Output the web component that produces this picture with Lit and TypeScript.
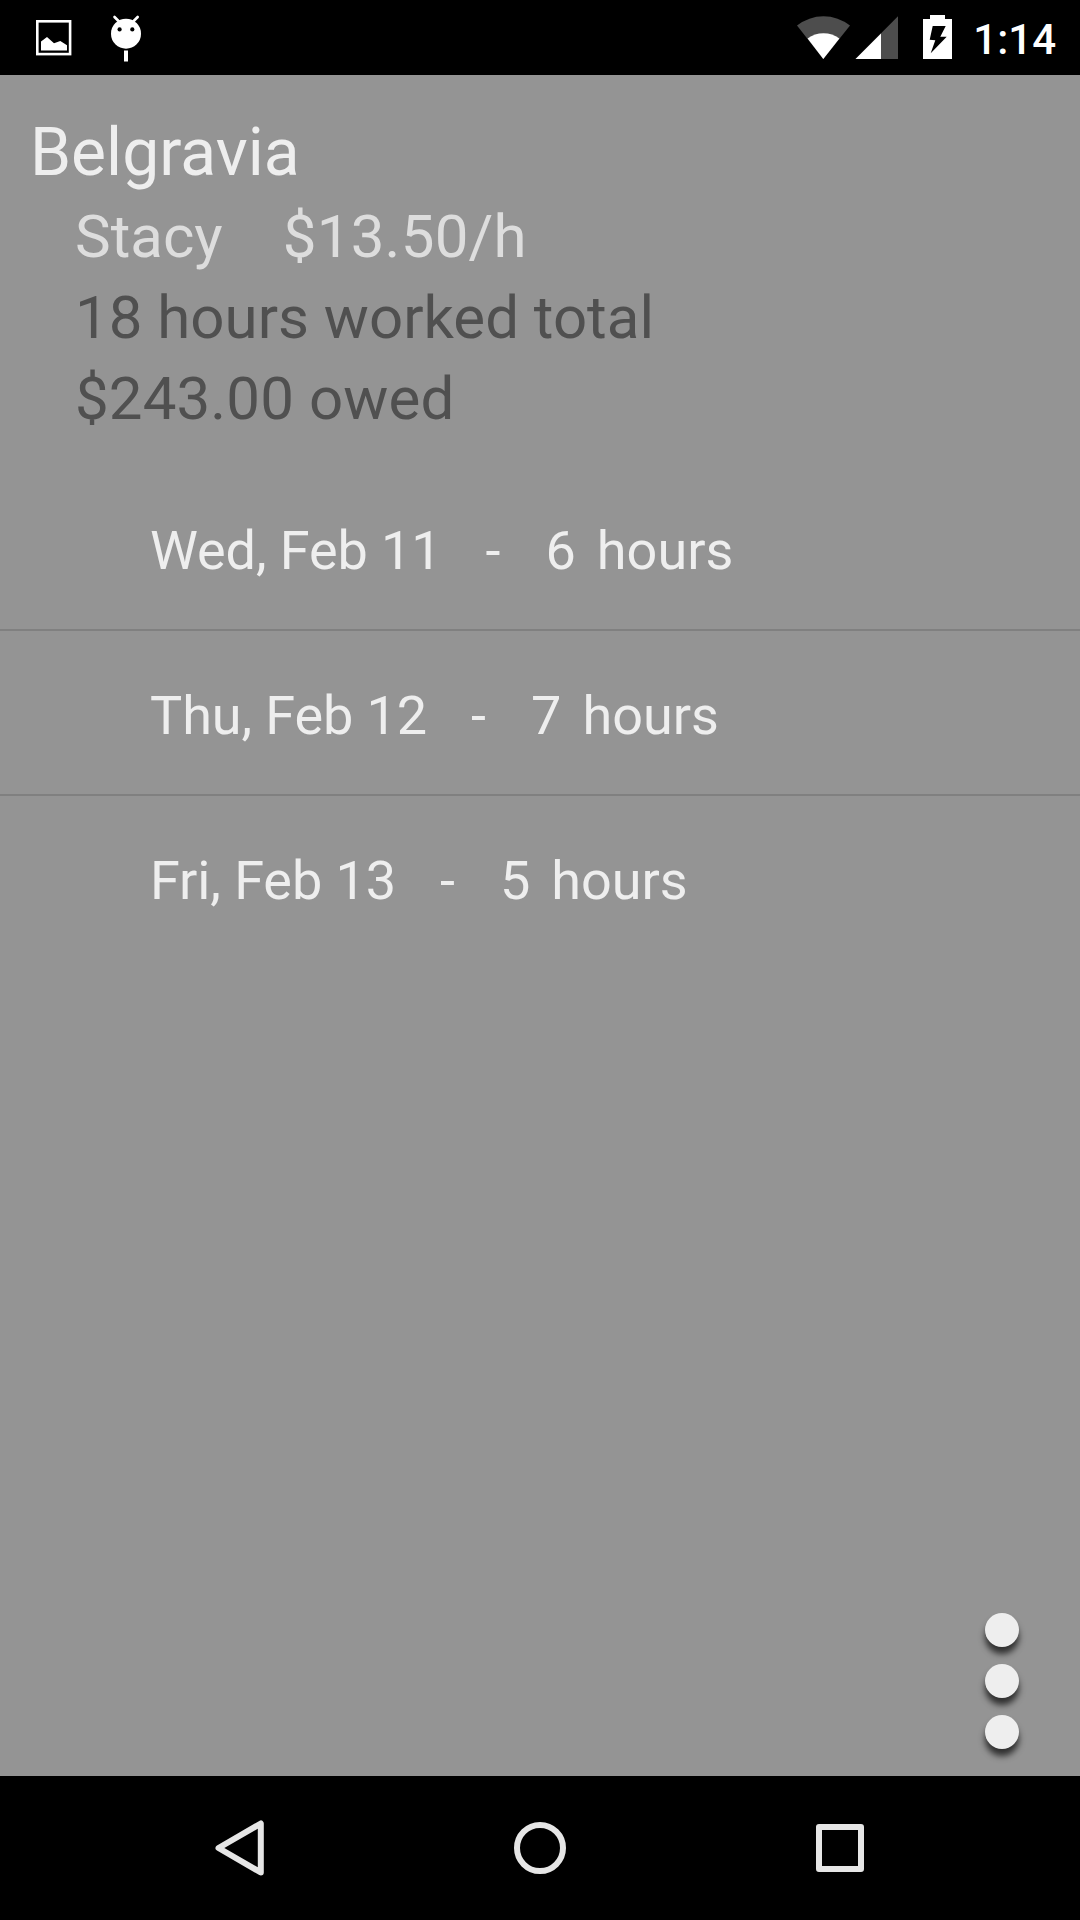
import { LitElement, html, css } from "lit";
import { customElement, property } from "lit/decorators.js";

interface Shift {
  day: string;
  hours: number;
}

@customElement("status-bar")
class StatusBar extends LitElement {
  static styles = css`
    :host {
      display: flex;
      justify-content: space-between;
      height: 75px;
      background: #000;
      color: #fff;
    }
    .group {
      display: flex;
      align-items: flex-start;
    }
    svg {
      display: block;
    }
    .clock {
      font-size: 42px;
      font-weight: 500;
      line-height: 75px;
      padding: 2px 24px 0 17px;
    }
  `;

  @property() time = "";

  render() {
    return html`
      <div class="group">
        <svg width="160" height="75" viewBox="0 0 160 75" fill="#fff">
          <rect x="37.3" y="21.3" width="32.8" height="32.8" fill="none" stroke="#fff" stroke-width="2.6" />
          <path d="M41 41.5 47 37l7 6.3 6.3-2.3 6.7 4.3v5.2H41z" />
          <circle cx="126" cy="33.7" r="15" />
          <path d="M114.5 17l5 5M137.7 17l-5 5" stroke="#fff" stroke-width="2.6" stroke-linecap="round" />
          <circle cx="119.6" cy="29.4" r="2.1" fill="#000" />
          <circle cx="132.3" cy="29.4" r="2.1" fill="#000" />
          <rect x="124" y="50.5" width="4" height="11" />
        </svg>
      </div>
      <div class="group">
        <svg width="160" height="75" viewBox="796 0 160 75" fill="#fff">
          <path d="M823.3 59 797 25.5a43 43 0 0 1 53 0z" fill="#4d4d4d" />
          <path d="M823.3 59 807.6 38.6a26 26 0 0 1 31.8 0z" />
          <path d="M855.5 59 898 16.3V59z" fill="#4d4d4d" />
          <path d="M855.5 59 881 33.4V59z" />
          <path d="M923 19h7v-4h15v4h7v40h-29z" />
          <path d="M932.7 26h13l-5.4 10.7h6.4l-16 16.6 4.6-13-5.6-.5z" fill="#000" />
        </svg>
        <div class="clock">${this.time}</div>
      </div>
    `;
  }
}

@customElement("job-summary")
class JobSummary extends LitElement {
  static styles = css`
    :host {
      display: block;
      padding: 34px 30px 27px;
      font-size: 60px;
      line-height: 81px;
      color: #505050;
    }
    .title {
      font-size: 66px;
      line-height: 87px;
      color: #eee;
    }
    .details {
      padding-left: 45px;
    }
    .worker {
      display: flex;
      gap: 60px;
      color: #ddd;
    }
    .rate {
      letter-spacing: 0.25px;
    }
    .owed {
      letter-spacing: 0.12px;
    }
  `;

  render() {
    return html`
      <div class="title">Belgravia</div>
      <div class="details">
        <div class="worker"><span>Stacy</span><span class="rate">$13.50/h</span></div>
        <div>18 hours worked total</div>
        <div class="owed">$243.00 owed</div>
      </div>
    `;
  }
}

@customElement("shift-list")
class ShiftList extends LitElement {
  static styles = css`
    .row {
      display: flex;
      box-sizing: border-box;
      height: 163px;
      padding: 6px 0 0 150px;
      font-size: 54px;
      line-height: 157px;
      color: #eee;
    }
    .row + .row {
      height: 165px;
      border-top: 2px solid #808080;
    }
    .day {
      letter-spacing: -0.09px;
    }
    .dash {
      margin: 0 45px 0 44px;
    }
    .unit {
      margin-left: 21px;
    }
  `;

  @property({ attribute: false }) shifts: Shift[] = [];

  render() {
    return this.shifts.map(
      (s) => html`
        <div class="row">
          <span class="day">${s.day}</span><span class="dash">-</span><span>${s.hours}</span
          ><span class="unit">hours</span>
        </div>
      `
    );
  }
}

@customElement("nav-bar")
class NavBar extends LitElement {
  static styles = css`
    :host {
      display: flex;
      justify-content: space-around;
      align-items: center;
      height: 144px;
      padding: 0 90px;
      background: #000;
    }
    svg {
      display: block;
      width: 60px;
      height: 60px;
      fill: none;
      stroke: #e6e6e6;
      stroke-width: 6;
      stroke-linejoin: round;
    }
  `;

  render() {
    return html`
      <svg viewBox="0 0 60 60"><path d="M8.5 30 50.8 5.5v49z" /></svg>
      <svg viewBox="0 0 60 60"><circle cx="30" cy="30" r="23" /></svg>
      <svg viewBox="0 0 60 60"><rect x="9" y="9" width="42" height="42" /></svg>
    `;
  }
}

@customElement("app-root")
class AppRoot extends LitElement {
  static styles = css`
    :host {
      display: flex;
      flex-direction: column;
      width: 1080px;
      height: 1920px;
      overflow: hidden;
      background: #949494;
      font-family: Roboto, "Liberation Sans", sans-serif;
    }
    .content {
      position: relative;
      flex: 1;
    }
    .menu {
      position: absolute;
      right: 61px;
      bottom: 27px;
      display: flex;
      flex-direction: column;
      gap: 17px;
    }
    .dot {
      width: 34px;
      height: 34px;
      border-radius: 50%;
      background: #eee;
      box-shadow: 0 7px 6px rgba(0, 0, 0, 0.68);
    }
  `;

  private shifts: Shift[] = [
    { day: "Wed, Feb 11", hours: 6 },
    { day: "Thu, Feb 12", hours: 7 },
    { day: "Fri, Feb 13", hours: 5 },
  ];

  render() {
    return html`
      <status-bar time="1:14"></status-bar>
      <div class="content">
        <job-summary></job-summary>
        <shift-list .shifts=${this.shifts}></shift-list>
        <div class="menu">
          <div class="dot"></div>
          <div class="dot"></div>
          <div class="dot"></div>
        </div>
      </div>
      <nav-bar></nav-bar>
    `;
  }
}
